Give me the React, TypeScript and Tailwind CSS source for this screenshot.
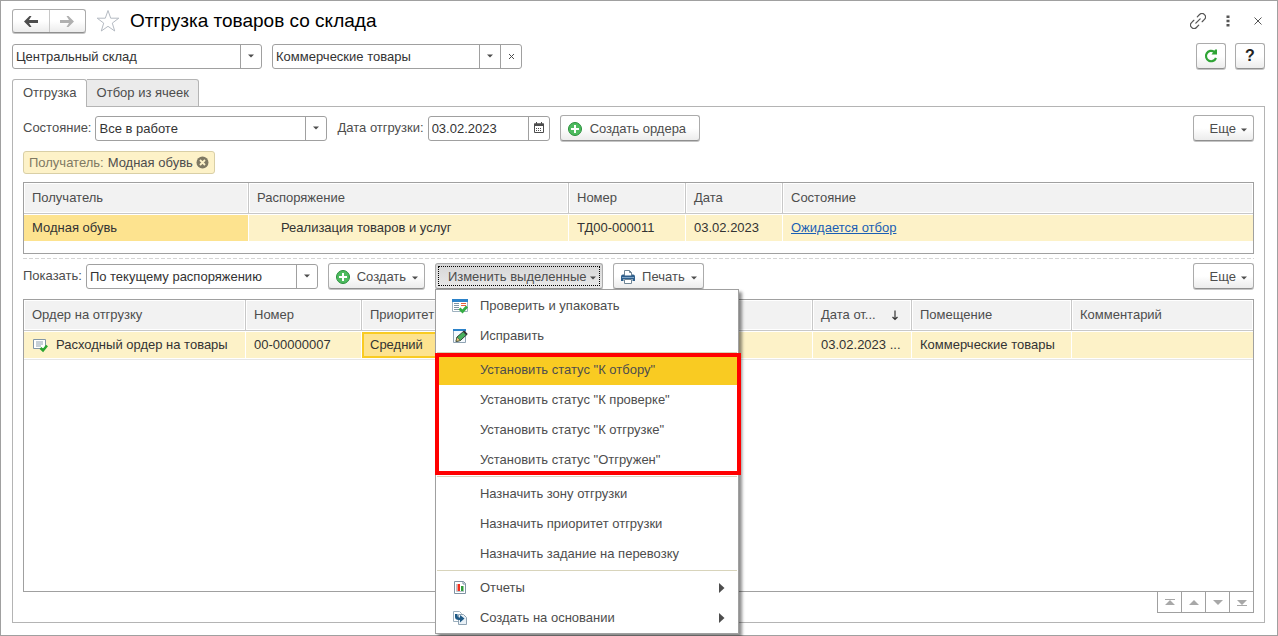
import { useState } from "react";
import type { ReactNode } from "react";

const buttonBase =
  "flex items-center rounded-[3px] border border-[#ababab] border-b-[#8f8f8f] shadow-[0_1px_0_#c4c4c4]";
const buttonFace = "bg-linear-to-b from-white from-50% to-[#ececec]";
const fieldBox = "relative flex h-[25px] rounded-[3px] border border-[#a0a0a0] bg-white text-[#333]";

function Caret() {
  return (
    <svg width="6" height="4" viewBox="0 0 6 4" className="mt-0.5 shrink-0" aria-hidden="true">
      <path d="M0 0.500h6L3 3.500z" fill="#4d4d4d" />
    </svg>
  );
}

function PlusIcon() {
  return (
    <svg width="16" height="16" viewBox="0 0 16 16" className="shrink-0" aria-hidden="true">
      <circle cx="8" cy="8" r="6.500" fill="#4dbb5f" stroke="#2a8f3c" />
      <path d="M8 4v8M4 8h8" stroke="#fff" strokeWidth="2" />
    </svg>
  );
}

function PrinterIcon() {
  return (
    <svg width="16" height="16" viewBox="0 0 16 16" className="shrink-0" aria-hidden="true">
      <path d="M4.500 7V1.500h5l2 2V7" fill="#fff" stroke="#6f8595" />
      <path d="M9.500 1.500v2h2" fill="none" stroke="#6f8595" />
      <path d="M3 5.500h1v1h8v-1h1q2 0 2 2V12h-2.500v-2h-9v2H1V7.500q0-2 2-2z" fill="#2f5f8c" />
      <path d="M2 8.500h12" stroke="#7fa6c8" />
      <path d="M4.500 10.500h7v4h-7z" fill="#fff" stroke="#6f8595" />
    </svg>
  );
}

function OrderIcon() {
  return (
    <svg width="16" height="16" viewBox="0 0 16 16" className="shrink-0" aria-hidden="true">
      <path d="M1.500 2.500h12v9h-12z" fill="#fff" stroke="#8296a6" />
      <path d="M4 5h7M4 7h7M4 9h5" stroke="#8fa1b0" />
      <path d="M8.500 11l2.500 2.500 4-5" fill="none" stroke="#2ba52f" strokeWidth="2.500" />
    </svg>
  );
}

function CheckPackIcon() {
  return (
    <svg width="16" height="16" viewBox="0 0 16 16" aria-hidden="true">
      <path d="M0.500 1.500h15v12h-15z" fill="#fff" stroke="#9fb2c0" />
      <path d="M0 1h16v3H0z" fill="#2c82c9" />
      <path d="M2 5.500h5M2 7.500h5M2 9.500h5M2 11.500h5" stroke="#8195a5" />
      <path d="M9 5.500h5M9 7.500h5" stroke="#e8603c" />
      <path d="M7.500 10.500l3 3 4.500-5" fill="none" stroke="#35ad43" strokeWidth="2.800" />
    </svg>
  );
}

function EditIcon() {
  return (
    <svg width="16" height="16" viewBox="0 0 16 16" aria-hidden="true">
      <path d="M1.500 1.500h12v13h-12z" fill="#f4f9fd" stroke="#8fa3b3" />
      <path d="M1 1h13v2H1z" fill="#2c82c9" />
      <path d="M4 13.500l1-4.500 7-6 3.200 3.200-6.800 6.300z" fill="#46b05c" stroke="#33443a" />
      <path d="M4 13.500l1-4.500 3.400 3.500z" fill="#e9c77a" stroke="#33443a" strokeWidth="0.600" />
      <path d="M11.500 3.200l3.300 3.300" stroke="#333" strokeWidth="1.800" />
    </svg>
  );
}

function ReportIcon() {
  return (
    <svg width="16" height="16" viewBox="0 0 16 16" aria-hidden="true">
      <path d="M2.500 1.500h9l2 2v10h-11z" fill="#fff" stroke="#7f93a3" />
      <path d="M11 1.500V4h2.500" fill="none" stroke="#7f93a3" />
      <path d="M5.500 4h2.500v7H5.500z" fill="#f0301e" />
      <path d="M9 6h2.500v5H9z" fill="#2f9c3c" />
      <path d="M4.500 4v7.500H12" fill="none" stroke="#b9c4cc" />
    </svg>
  );
}

function BasedOnIcon() {
  return (
    <svg width="16" height="16" viewBox="0 0 16 16" aria-hidden="true">
      <path d="M1.500 1.500h6l2 2v8h-8z" fill="#fff" stroke="#9db0be" />
      <path d="M6.500 4.500h5l3 3v7h-8z" fill="#e9f1f7" stroke="#8fa3b3" />
      <path d="M3 4v3q0 3 4 3h1v2.500L12.500 8.500 8 5v2.500H7Q5.500 7.500 5.500 4z" fill="#1f5a86" />
    </svg>
  );
}

interface PickerProps {
  id: string;
  label: string;
  value: string;
  width: string;
  hideLabel?: boolean;
  clearable?: boolean;
}

function Picker({ id, label, value, width, hideLabel, clearable }: PickerProps) {
  return (
    <div className="flex items-center">
      {!hideLabel && (
        <label htmlFor={id} className="mr-1">
          {label}
        </label>
      )}
      <div className={`${fieldBox} ${width}`}>
        <div className="relative flex min-w-0 flex-1">
          <select
            id={id}
            aria-label={hideLabel ? label : undefined}
            defaultValue={value}
            className="h-full w-full appearance-none bg-transparent pt-px pr-6 pl-[3px] outline-none"
          >
            <option>{value}</option>
          </select>
          <span className="pointer-events-none absolute inset-y-0 right-0 flex w-[21px] items-center justify-center border-l border-[#a0a0a0] pb-0.5">
            <Caret />
          </span>
        </div>
        {clearable && (
          <button type="button" aria-label="Очистить" className="flex w-[21px] items-center justify-center border-l border-[#a0a0a0]">
            <svg width="7" height="7" viewBox="0 0 7 7" aria-hidden="true">
              <path d="M1 1l5 5M6 1l-5 5" stroke="#4d4d4d" />
            </svg>
          </button>
        )}
      </div>
    </div>
  );
}

function MoreButton() {
  return (
    <button type="button" className={`${buttonBase} ${buttonFace} ml-auto h-[26px] w-[61px] justify-end gap-[5px] pt-px pr-[6px]`}>
      Еще
      <Caret />
    </button>
  );
}

function Th({ children }: { children?: ReactNode }) {
  return (
    <th className="h-[31px] truncate border-r border-b border-[#c8c8c8] bg-[#f2f2f2] px-2 text-left font-normal shadow-[inset_0_0_0_1px_#fff] last:border-r-0">
      {children}
    </th>
  );
}

function Td({ children, tone = "bg-[#fdf2c8]" }: { children?: ReactNode; tone?: string }) {
  return (
    <td className={`h-7 truncate border-y border-r border-white px-2 text-[#333] last:border-r-0 ${tone}`}>{children}</td>
  );
}

interface MenuItemProps {
  children: ReactNode;
  icon?: ReactNode;
  submenu?: boolean;
  active?: boolean;
}

function MenuItem({ children, icon, submenu, active }: MenuItemProps) {
  return (
    <button
      type="button"
      role="menuitem"
      className={`flex h-[30px] w-full items-center pr-3 pl-4 text-left ${active ? "bg-[#f9cb22]" : "hover:bg-[#fdf2c8]"}`}
    >
      <span className="flex w-7 shrink-0">{icon}</span>
      <span className="flex-1">{children}</span>
      {submenu && (
        <svg width="8" height="10" viewBox="0 0 8 10" aria-hidden="true">
          <path d="M1 0l5.500 5L1 10z" fill="#4d4d4d" />
        </svg>
      )}
    </button>
  );
}

function MenuSeparator() {
  return <div role="separator" className="mx-px mt-px mb-0.5 h-px bg-[#d8d4bb]" />;
}

const statuses = ["К отбору", "К проверке", "К отгрузке", "Отгружен"];

function ChangeMenu() {
  return (
    <div
      role="menu"
      className="absolute top-full left-0 z-10 w-[304px] border border-[#a0a0a0] bg-white pt-px shadow-[3px_3px_3px_rgba(0,0,0,0.45)]"
    >
      <MenuItem icon={<CheckPackIcon />}>Проверить и упаковать</MenuItem>
      <MenuItem icon={<EditIcon />}>Исправить</MenuItem>
      <MenuSeparator />
      <div className="relative">
        {statuses.map((status, index) => (
          <MenuItem key={status} active={index === 0}>{`Установить статус "${status}"`}</MenuItem>
        ))}
        <div className="pointer-events-none absolute -top-0.5 -right-[3px] bottom-0 -left-px border-4 border-[#ff0000]" />
      </div>
      <MenuSeparator />
      <MenuItem>Назначить зону отгрузки</MenuItem>
      <MenuItem>Назначить приоритет отгрузки</MenuItem>
      <MenuItem>Назначить задание на перевозку</MenuItem>
      <MenuSeparator />
      <MenuItem icon={<ReportIcon />} submenu>
        Отчеты
      </MenuItem>
      <MenuItem icon={<BasedOnIcon />} submenu>
        Создать на основании
      </MenuItem>
    </div>
  );
}

const pagerButtons = [
  { label: "В начало", path: "M1 1h10v1H1zM6 2L11 7H1z" },
  { label: "Вверх", path: "M6 2L11 7H1z" },
  { label: "Вниз", path: "M6 7L1 2h10z" },
  { label: "В конец", path: "M6 7L1 2h10zM1 7h10v1H1z" },
];

export default function App() {
  const [menuOpen, setMenuOpen] = useState(true);

  return (
    <div className="flex min-h-screen flex-col border border-[#a0a0a0] bg-white pt-2 pr-3 pb-3 pl-[11px] font-['Liberation_Sans',Arial,sans-serif] text-[13px] leading-4 text-[#4d4d4d]">
      <header className="flex h-6 items-center">
        <div className={`${buttonBase} ${buttonFace} h-6 w-[74px]`}>
          <button type="button" aria-label="Назад" className="flex h-full flex-1 items-center justify-center border-r border-[#c8c8c8]">
            <svg width="14" height="11" viewBox="0 0 14 11" aria-hidden="true">
              <path d="M0 5.500L5.500 0H7.500L5 4h9v3H5l2.500 4h-2z" fill="#4d4d4d" />
            </svg>
          </button>
          <button type="button" aria-label="Вперед" className="flex h-full flex-1 items-center justify-center">
            <svg width="14" height="11" viewBox="0 0 14 11" aria-hidden="true">
              <path d="M14 5.500L8.500 0H6.500L9 4H0v3h9l-2.500 4h2z" fill="#b0b0b0" />
            </svg>
          </button>
        </div>
        <button type="button" aria-label="Добавить в избранное" className="ml-[10px]">
          <svg width="24" height="24" viewBox="0 0 24 24" className="block" aria-hidden="true">
            <path
              d="M12 1.500l2.700 7.700h8.100l-6.500 4.900 2.400 7.900-6.700-4.700-6.700 4.700 2.400-7.900L1.200 9.200h8.100z"
              fill="#fff"
              stroke="#b4bac2"
            />
          </svg>
        </button>
        <h1 className="ml-[10px] text-[19px] leading-6 text-black">Отгрузка товаров со склада</h1>
        <div className="ml-auto flex items-center pr-[3px]">
          <button type="button" aria-label="Ссылка">
            <svg width="16" height="16" viewBox="1.500 1.500 13 13" className="block" aria-hidden="true">
              <g transform="rotate(-45 8 8)" fill="none" stroke="#555" strokeLinecap="round">
                <path d="M6 5.200H3.400a2.800 2.800 0 0 0 0 5.600H6" />
                <path d="M10 5.200h2.600a2.800 2.800 0 0 1 0 5.600H10" />
                <path d="M5.500 8h5" />
              </g>
            </svg>
          </button>
          <button type="button" aria-label="Меню" className="ml-5">
            <svg width="4" height="12" viewBox="0 0 4 12" className="block" aria-hidden="true">
              <path d="M0.500 0.500h3v2.500h-3zM0.500 4.800h3v2.500h-3zM0.500 9h3v2.500h-3z" fill="#555" />
            </svg>
          </button>
          <button type="button" aria-label="Закрыть" className="ml-6">
            <svg width="8" height="8" viewBox="0 0 8 8" className="block" aria-hidden="true">
              <path d="M0.500 0.500l7 7M7.500 0.500l-7 7" stroke="#555" />
            </svg>
          </button>
        </div>
      </header>

      <div className="mt-[10px] flex items-center gap-[10px]">
        <Picker id="warehouse" label="Склад" hideLabel value="Центральный склад" width="w-[250px]" />
        <Picker id="room" label="Помещение" hideLabel value="Коммерческие товары" width="w-[250px]" clearable />
        <div className="ml-auto flex gap-[9px]">
          <button type="button" aria-label="Обновить" className={`${buttonBase} ${buttonFace} h-[26px] w-[30px] justify-center`}>
            <svg width="14" height="14" viewBox="0 0 14 14" aria-hidden="true">
              <path d="M12 9a5.200 5.200 0 1 1-1.800-6.200" fill="none" stroke="#2fa435" strokeWidth="2.200" />
              <path d="M7.500 5.500H13V0.500H11.200z" fill="#2fa435" />
            </svg>
          </button>
          <button type="button" aria-label="Справка" className={`${buttonBase} ${buttonFace} h-[26px] w-[30px] justify-center text-base font-bold text-[#222]`}>
            ?
          </button>
        </div>
      </div>

      <div role="tablist" className="relative z-[1] mt-[10px] -mb-px flex h-7">
        <button type="button" role="tab" aria-selected="true" className="rounded-t-[3px] border border-b-0 border-[#b4b4b4] bg-white pr-[9px] pb-px pl-[10px]">
          Отгрузка
        </button>
        <button type="button" role="tab" aria-selected="false" className="rounded-tr-[3px] border border-l-0 border-[#b4b4b4] bg-[#ebebeb] pr-[9px] pl-[10px]">
          Отбор из ячеек
        </button>
      </div>

      <main className="flex flex-1 flex-col border border-[#b4b4b4] px-[10px] pt-2 pb-[9px]">
        <div className="flex items-center gap-[10px]">
          <Picker id="state" label="Состояние:" value="Все в работе" width="w-[232px]" />
          <div className="flex items-center">
            <label htmlFor="ship-date" className="mr-1">
              Дата отгрузки:
            </label>
            <div className={`${fieldBox} w-[122px]`}>
              <input id="ship-date" type="text" defaultValue="03.02.2023" className="min-w-0 flex-1 bg-transparent px-[3px] pt-px outline-none" />
              <button type="button" aria-label="Выбрать дату" className="flex w-[21px] items-center justify-center border-l border-[#a0a0a0] pb-0.5">
                <svg width="10" height="11" viewBox="0 0 10 11" aria-hidden="true">
                  <path d="M0.500 2h9v8.500h-9z" fill="#fff" stroke="#4d4d4d" />
                  <path d="M0 1.500h10V4H0z" fill="#4d4d4d" />
                  <path d="M2.500 0v2M7.500 0v2" stroke="#4d4d4d" />
                  <path d="M2 6.500h6M2 8.500h6" stroke="#4d4d4d" strokeDasharray="1 1" />
                </svg>
              </button>
            </div>
          </div>
          <button type="button" className={`${buttonBase} ${buttonFace} h-[26px] w-[140px] gap-[7px] px-[6px] pt-px`}>
            <PlusIcon />
            Создать ордера
          </button>
          <MoreButton />
        </div>

        <div className="mt-[10px] flex">
          <div className="flex h-[23px] items-center rounded-[3px] border border-[#d9cfa6] bg-[#fdf2c8] px-[5px]">
            <span className="mr-1 text-[#7f7963]">Получатель:</span>
            <span>Модная обувь</span>
            <button type="button" aria-label="Убрать отбор" className="ml-[3px]">
              <svg width="13" height="13" viewBox="0 0 13 13" className="block" aria-hidden="true">
                <circle cx="6.500" cy="6.500" r="6" fill="#7f7963" />
                <path d="M4 4l5 5M9 4L4 9" stroke="#fdf2c8" strokeWidth="1.800" />
              </svg>
            </button>
          </div>
        </div>

        <div className="mt-2 border border-[#a0a0a0] pb-[11px]">
          <table className="w-full table-fixed border-separate border-spacing-0">
            <colgroup>
              <col className="w-[225px]" />
              <col className="w-[320px]" />
              <col className="w-[117px]" />
              <col className="w-[97px]" />
              <col />
            </colgroup>
            <thead>
              <tr>
                <Th>Получатель</Th>
                <Th>Распоряжение</Th>
                <Th>Номер</Th>
                <Th>Дата</Th>
                <Th>Состояние</Th>
              </tr>
            </thead>
            <tbody>
              <tr>
                <Td tone="bg-[#fde38f]">Модная обувь</Td>
                <Td>
                  <span className="pl-6">Реализация товаров и услуг</span>
                </Td>
                <Td>ТД00-000011</Td>
                <Td>03.02.2023</Td>
                <Td>
                  <a href="#pick" className="text-[#1a5fb4] underline">
                    Ожидается отбор
                  </a>
                </Td>
              </tr>
            </tbody>
          </table>
        </div>

        <div className="mt-1 h-px bg-[repeating-linear-gradient(90deg,#d4d4d4_0_4px,transparent_4px_6px)]" />

        <div className="mt-1 flex items-center gap-[10px]">
          <Picker id="show" label="Показать:" value="По текущему распоряжению" width="w-[232px]" />
          <button type="button" className={`${buttonBase} ${buttonFace} h-[26px] w-[97px] justify-between px-[6px] pt-px`}>
            <PlusIcon />
            Создать
            <Caret />
          </button>
          <div className="relative">
            <button
              type="button"
              aria-haspopup="menu"
              aria-expanded={menuOpen}
              onClick={() => setMenuOpen(!menuOpen)}
              className={`${buttonBase} h-[26px] w-[168px] bg-linear-to-b from-[#d6d6d6] to-[#e9e9e9] p-0.5`}
            >
              <span className="flex h-full w-full items-center justify-between border border-dotted border-black pt-px pr-[3px] pl-[9px]">
                Изменить выделенные
                <Caret />
              </span>
            </button>
            {menuOpen && <ChangeMenu />}
          </div>
          <button type="button" className={`${buttonBase} ${buttonFace} h-[26px] w-[91px] justify-between px-[6px] pt-px`}>
            <PrinterIcon />
            Печать
            <Caret />
          </button>
          <MoreButton />
        </div>

        <div className="mt-[10px] flex-1 border border-[#a0a0a0]">
          <table className="w-full table-fixed border-separate border-spacing-0">
            <colgroup>
              <col className="w-[222px]" />
              <col className="w-[116px]" />
              <col className="w-[116px]" />
              <col />
              <col className="w-[99px]" />
              <col className="w-[160px]" />
              <col className="w-[181px]" />
            </colgroup>
            <thead>
              <tr>
                <Th>Ордер на отгрузку</Th>
                <Th>Номер</Th>
                <Th>Приоритет</Th>
                <Th />
                <Th>
                  <span className="flex items-center justify-between pr-1">
                    Дата от...
                    <svg width="8" height="11" viewBox="0 0 8 11" aria-hidden="true">
                      <path d="M4 0.500v9M1.500 7L4 9.500 6.500 7" fill="none" stroke="#333" strokeWidth="1.200" />
                    </svg>
                  </span>
                </Th>
                <Th>Помещение</Th>
                <Th>Комментарий</Th>
              </tr>
            </thead>
            <tbody>
              <tr>
                <Td>
                  <span className="flex items-center gap-2">
                    <OrderIcon />
                    Расходный ордер на товары
                  </span>
                </Td>
                <Td>00-00000007</Td>
                <Td tone="bg-[#fde38f] shadow-[inset_0_0_0_2px_#f9cb22]">Средний</Td>
                <Td />
                <Td>03.02.2023 ...</Td>
                <Td>Коммерческие товары</Td>
                <Td />
              </tr>
            </tbody>
          </table>
          <div className="h-px bg-[#e6e6e6]" />
        </div>

        <div className="-mt-px flex justify-end">
          <div className="flex divide-x divide-[#a0a0a0] border border-[#a0a0a0]">
            {pagerButtons.map((button) => (
              <button key={button.label} type="button" aria-label={button.label} className="flex h-5 w-6 items-center justify-center last:w-[23px]">
                <svg width="12" height="9" viewBox="0 0 12 9" aria-hidden="true">
                  <path d={button.path} fill="#a8a8a8" />
                </svg>
              </button>
            ))}
          </div>
        </div>
      </main>
    </div>
  );
}
